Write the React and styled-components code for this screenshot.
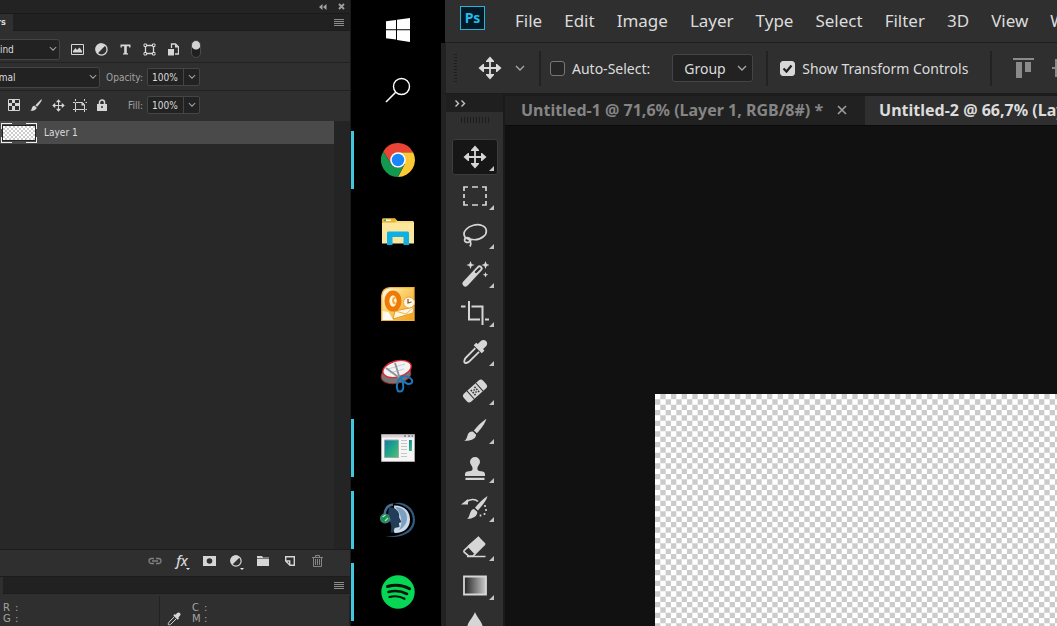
import React from 'react';
import styled, { createGlobalStyle, css } from 'styled-components';

const GlobalStyle = createGlobalStyle`
  * {
    box-sizing: border-box;
  }

  body {
    margin: 0;
    background: #000;
    overflow: hidden;
  }

  button, input, select {
    font: inherit;
    color: inherit;
    margin: 0;
  }
`

const Screen = styled.div`
  display: flex;
  height: 100vh;
  overflow: hidden;
  color: #dcdcdc;
`

const IconButton = styled.button`
  display: flex;
  align-items: center;
  justify-content: center;
  flex: none;
  position: relative;
  width: ${p => p.$w || 22}px;
  height: ${p => p.$h || 20}px;
  padding: 0;
  border: 0;
  background: none;
  color: ${p => p.$color || '#d6d6d6'};
`

/* ---------- layers panel ---------- */

const LayersClip = styled.aside`
  flex: none;
  width: 351px;
  overflow: hidden;
  border-right: 1px solid #1a1a1a;
  background: #2f2f2f;
  font-family: 'DejaVu Sans Condensed', 'DejaVu Sans', sans-serif;
  font-size: 10px;
`

const LayersPanel = styled.div`
  display: flex;
  flex-direction: column;
  height: 100%;
  margin-left: -24px;
`

const PanelTop = styled.div`
  display: flex;
  align-items: center;
  justify-content: flex-end;
  height: 14px;
  flex: none;
  background: #232323;
  border-bottom: 1px solid #1a1a1a;
`

const PanelTabs = styled.div`
  display: flex;
  justify-content: space-between;
  height: 17px;
  flex: none;
  background: #212121;
  border-bottom: 1px solid #1c1c1c;
`

const PanelTab = styled.div`
  width: ${p => p.$w}px;
  height: 17px;
  line-height: 17px;
  font-size: 9px;
  font-weight: bold;
  background: #2f2f2f;
`

const PanelRow = styled.div`
  display: flex;
  align-items: center;
  flex: none;
  height: ${p => p.$h}px;
  padding: ${p => p.$top || 0}px 0 ${p => p.$bottom || 0}px ${p => p.$left || 0}px;
  border-bottom: ${p => p.$last ? '0' : '1px solid #222'};
`

const SelectBox = styled.label`
  display: flex;
  align-items: center;
  position: relative;
  flex: none;
  width: ${p => p.$w}px;
  height: ${p => p.$h}px;
  border: 1px solid #454545;
  border-radius: 3px;
  background: #222;

  select {
    width: 100%;
    height: 100%;
    padding: 0 0 0 ${p => p.$pad}px;
    border: 0;
    background: none;
    appearance: none;
  }

  svg {
    position: absolute;
    right: ${p => p.$arrow || 2}px;
    pointer-events: none;
  }
`

const FieldLabel = styled.label`
  width: ${p => p.$w}px;
  padding-right: 4px;
  text-align: right;
  color: #a3a3a3;
`

const PercentBox = styled.div`
  display: flex;
  width: 53px;
  height: 18px;
  border: 1px solid #454545;
  border-radius: 2px;
  background: #222;

  input {
    width: 36px;
    height: 16px;
    padding: 0 0 0 4px;
    border: 0;
    border-right: 1px solid #454545;
    background: none;
  }
`

const Toggle = styled.button`
  width: 10px;
  height: 18px;
  margin-left: 7px;
  padding: 0;
  border: 1px solid #4a4a4a;
  border-radius: 5px;
  background: radial-gradient(circle at 4px 4px, #d2d2d2 4px, #1f1f1f 5px);
`

const LayerArea = styled.div`
  display: flex;
  flex: 1;
  min-height: 0;
  background: #282828;
`

const LayerList = styled.ul`
  flex: 1;
  margin: 0;
  padding: 0;
  list-style: none;
`

const LayerScroll = styled.div`
  width: 16px;
  background: #242424;
`

// six squares each way per tile
const checker = css`
  background-color: #fff;
  background-image: url("data:image/svg+xml,%3Csvg xmlns='http://www.w3.org/2000/svg' viewBox='0 0 6 6'%3E%3Cpath fill='%23cbcbcb' d='M1 0h1v1H1zM3 0h1v1H3zM5 0h1v1H5zM0 1h1v1H0zM2 1h1v1H2zM4 1h1v1H4zM1 2h1v1H1zM3 2h1v1H3zM5 2h1v1H5zM0 3h1v1H0zM2 3h1v1H2zM4 3h1v1H4zM1 4h1v1H1zM3 4h1v1H3zM5 4h1v1H5zM0 5h1v1H0zM2 5h1v1H2zM4 5h1v1H4z'/%3E%3C/svg%3E");
`

const LayerRow = styled.li`
  display: flex;
  align-items: center;
  height: 23px;
  padding-left: 25px;
  background: #4a4a4a;
`

const LayerThumb = styled.div`
  display: flex;
  align-items: center;
  justify-content: center;
  width: 36px;
  height: 20px;
  margin-right: 7px;
  background:
    linear-gradient(#eee, #eee) 0 0 / 11px 1px,
    linear-gradient(#eee, #eee) 0 0 / 1px 6px,
    linear-gradient(#eee, #eee) 100% 0 / 11px 1px,
    linear-gradient(#eee, #eee) 100% 0 / 1px 6px,
    linear-gradient(#eee, #eee) 0 100% / 11px 1px,
    linear-gradient(#eee, #eee) 0 100% / 1px 6px,
    linear-gradient(#eee, #eee) 100% 100% / 11px 1px,
    linear-gradient(#eee, #eee) 100% 100% / 1px 6px;
  background-repeat: no-repeat;

  &::before {
    content: '';
    width: 32px;
    height: 14px;
    border: 1px solid #222;
    ${checker}
    background-size: 12px 12px;
  }
`

const PanelFooter = styled.div`
  display: flex;
  align-items: center;
  justify-content: flex-end;
  gap: 5px;
  height: 28px;
  flex: none;
  padding: 0 22px 4px 0;
  border-top: 1px solid #1c1c1c;
  border-bottom: 1px solid #1c1c1c;
`

const ColorInfo = styled.div`
  display: flex;
  flex: none;
  height: 32px;
`

const ColorHalf = styled.div`
  display: flex;
  align-items: flex-start;
  flex: ${p => p.$grow ? 1 : 'none'};
  width: ${p => p.$grow ? 'auto' : '184px'};
  margin-top: 2px;
  padding: 6px 0 0 ${p => p.$grow ? 5 : 27}px;
  border-right: 1px solid #222;
  font-family: 'DejaVu Sans', sans-serif;
  line-height: 11px;
  color: #a3a3a3;
`

const Channel = styled.div`
  display: grid;
  grid-template-columns: 12px 5px;
`

/* ---------- task bar ---------- */

const TaskBar = styled.nav`
  display: flex;
  flex-direction: column;
  flex: none;
  width: 90px;
  overflow: hidden;
  background: #000;
`

const TaskButton = styled.button`
  display: flex;
  align-items: center;
  justify-content: center;
  flex: none;
  height: ${p => p.$small ? 60 : 72}px;
  padding: 0 0 0 4px;
  border: 0;
  background: ${p => p.$running
    ? 'linear-gradient(#41c8df, #41c8df) 0 50% / 3px 58px no-repeat'
    : 'none'};
`

const TaskApps = styled.div`
  display: flex;
  flex-direction: column;
  margin-top: 4px;
`

/* ---------- main window ---------- */

const Window = styled.main`
  display: flex;
  flex-direction: column;
  flex: 1;
  min-width: 0;
  font-family: 'Noto Sans', sans-serif;
`

const MenuBar = styled.header`
  display: flex;
  align-items: center;
  flex: none;
  height: 43px;
  margin-left: 4px;
  padding: 0 0 1px 15px;
  overflow: hidden;
  background: #2f2f2f;
  border-bottom: 1px solid #1f1f1f;
`

const Logo = styled.div`
  display: flex;
  align-items: center;
  justify-content: center;
  flex: none;
  width: 25px;
  height: 24px;
  margin: 0 30px 5px 0;
  padding-bottom: 1px;
  border: 1px solid #26b4dc;
  background: #031926;
  color: #22bdec;
  font-size: 14px;
  font-weight: bold;
`

const Menu = styled.div`
  display: flex;
  gap: 22px;
  flex: none;
`

const MenuItem = styled.button`
  padding: 0;
  border: 0;
  background: none;
  font-size: 17px;
  line-height: 24px;
  white-space: nowrap;
`

const OptionsBar = styled.div`
  display: flex;
  align-items: center;
  flex: none;
  height: 51px;
  padding-left: 8px;
  border-left: 5px solid #222;
  border-bottom: 1px solid #1c1c1c;
  overflow: hidden;
  background: #2f2f2f;
  font-size: 14px;
`

const Grip = styled.div`
  flex: none;
  width: ${p => p.$across ? 28 : 3}px;
  height: ${p => p.$across ? 6 : 28}px;
  background: repeating-linear-gradient(${p => p.$across ? '90deg' : '180deg'}, #1d1d1d 0 1px, transparent 1px 3px);
`

const Divider = styled.div`
  flex: none;
  width: 2px;
  height: 35px;
  background: #222;
`

const CheckLabel = styled.label`
  display: flex;
  align-items: center;
  gap: 7px;
  flex: none;
  white-space: nowrap;

  input {
    width: 15px;
    height: 15px;
    border: 1px solid #777;
    border-radius: 3px;
    background: #262626;
    appearance: none;
  }

  input:checked {
    border-color: #d8d8d8;
    background: #d8d8d8;
  }
`

const CheckWrap = styled.span`
  display: grid;
  place-items: center;

  > * {
    grid-area: 1 / 1;
  }

  svg {
    z-index: 1;
    pointer-events: none;
  }
`

const OptionGroup = styled.div`
  display: flex;
  align-items: center;
  flex: none;
  gap: ${p => p.$gap}px;
  padding: 0 ${p => p.$right}px 0 ${p => p.$left}px;
`

const Workspace = styled.div`
  display: flex;
  flex: 1;
  min-height: 0;
`

const ToolStrip = styled.div`
  display: flex;
  flex-direction: column;
  flex: none;
  width: 64px;
  border-left: 5px solid #222;
  border-right: 2px solid #1a1a1a;
  overflow: hidden;
  background: #2f2f2f;
`

const ToolHead = styled.div`
  display: flex;
  align-items: center;
  flex: none;
  height: 18px;
  padding-left: 8px;
  background: #1f1f1f;
`

const ToolGrip = styled.div`
  display: flex;
  justify-content: center;
  flex: none;
  height: 26px;
  padding-top: 5px;
`

const ToolList = styled.div`
  display: flex;
  flex-direction: column;
  gap: 3px;
  padding: 1px 5px 0 6px;
`

const Tool = styled.button`
  display: flex;
  align-items: center;
  justify-content: center;
  flex: none;
  height: 36px;
  padding: 0;
  border: 1px solid ${p => p.$active ? '#3c3c3c' : 'transparent'};
  border-radius: 3px;
  background: ${p => p.$active ? '#161616' : 'none'};
  color: #d6d6d6;
`

const ToolCell = styled.div`
  display: grid;
  position: relative;
  flex: none;
`

const Corner = styled.span`
  position: absolute;
  right: 4px;
  bottom: 4px;
  border-style: solid;
  border-width: 0 0 5px 5px;
  border-color: transparent transparent #c4c4c4 transparent;
`

const Documents = styled.section`
  display: flex;
  flex-direction: column;
  flex: 1;
  min-width: 0;
  background: #111;
`

const DocTabs = styled.div`
  display: flex;
  flex: none;
  height: 32px;
  padding-left: 2px;
  overflow: hidden;
  background: #212121;
  border-top: 2px solid #1c1c1c;
  border-bottom: 1px solid #0b0b0b;
`

const DocTab = styled.div`
  display: flex;
  align-items: center;
  gap: 14px;
  flex: none;
  padding: 0 18px 1px 14px;
  background: ${p => p.$active ? '#2f2f2f' : 'none'};
  color: ${p => p.$active ? '#dcdcdc' : '#858585'};
  font-size: 16px;
  font-weight: bold;
  white-space: nowrap;
`

const CanvasArea = styled.div`
  display: flex;
  flex: 1;
  min-height: 0;
  padding: 268px 0 0 150px;
`

const Canvas = styled.div`
  flex: 1;
  ${checker}
  background-size: 32px 32px;
`

/* ---------- icons ---------- */

const Svg = ({ s = 24, w, h, box, children }) => (
  <svg width={w || s} height={h || s} viewBox={box || '0 0 24 24'} fill="none" aria-hidden="true">
    {children}
  </svg>
)

const Chevron = ({ s = 8 }) => (
  <Svg w={s} h={s / 2 + 2} box="0 0 10 7">
    <path d="M1 1l4 4 4-4" stroke="#a8a8a8" strokeWidth="1.3" />
  </Svg>
)

const MenuLines = () => (
  <Svg w={10} h={9} box="0 0 10 9">
    <path d="M0 1.5h10M0 3.5h10M0 5.5h10M0 7.5h10" stroke="#8c8c8c" />
  </Svg>
)

const MoveIcon = ({ s = 24 }) => (
  <Svg s={s}>
    <path d="M12 4v16M4 12h16" stroke="currentColor" strokeWidth="1.8" />
    <path d="M12 .5l4 4.500v1H8V5zM12 23.500l4-4.500v-1H8v1zM.5 12L5 8h1v8H5zM23.500 12L19 8h-1v8h1z" fill="currentColor" />
  </Svg>
)

const BrushIcon = ({ s = 26 }) => (
  <Svg s={s}>
    <path d="M22.5 1.5C18.5 4 14 8.5 11 12.5l2.7 2.5C17.5 11 21.5 5.5 22.5 1.5z" fill="currentColor" />
    <path d="M10.2 13.5l2.7 2.6c.5 3-3.5 6.2-10.9 5.9 2.5-1.3 2.3-3.2 3.3-5.7.9-2.2 3-3.3 4.9-2.8z" fill="currentColor" />
  </Svg>
)

const DropperIcon = ({ s = 26 }) => (
  <Svg s={s}>
    <path d="M22.2 1.9c1.5 1.5 1.3 3.4 0 4.7l-2.7 2.7 1.2 1.5-2.5 2.3-7.4-7.3 2.3-2.4 1.5 1.2 2.8-2.7c1.3-1.3 3.4-1.4 4.8 0z" fill="currentColor" />
    <path d="M12.3 8.5L3.500 17.3c-1 1-1.9 3.7-1.1 4.5s3.4-.1 4.4-1.1l8.900-8.900" stroke="currentColor" strokeWidth="1.7" />
  </Svg>
)

const HalfCircle = ({ s = 13 }) => (
  <Svg s={s} box="0 0 14 14">
    <circle cx="7" cy="7" r="6" stroke="currentColor" strokeWidth="1.4" />
    <path d="M11.2 2.8A6 6 0 1 0 2.8 11.2z" fill="currentColor" />
  </Svg>
)

const ImageIcon = () => (
  <Svg w={13} h={11} box="0 0 13 11">
    <path d="M.5.5h12v10H.5z" stroke="currentColor" />
    <path d="M2 8.500V7l2.500-3L6 6l2.500-2.500L11 7v1.500z" fill="currentColor" />
  </Svg>
)

const TypeIcon = () => (
  <Svg w={11} h={11} box="0 0 11 11">
    <path d="M.5.5h10v3H9.200L9 2.200H6.800v7H8v1.300H3V9.200h1.200v-7H2l-.2 1.300H.5z" fill="currentColor" />
  </Svg>
)

const ShapeIcon = () => (
  <Svg w={13} h={13} box="0 0 13 13">
    <path d="M3 2.5h7M3 10.5h7M2.5 3v7M10.5 3v7" stroke="currentColor" strokeWidth="1.3" />
    <path d="M1 1h2.500v2.500H1zM9.500 1H12v2.500H9.500zM1 9.500h2.500V12H1zM9.500 9.500H12V12H9.500z" stroke="currentColor" fill="#2f2f2f" />
  </Svg>
)

const SmartIcon = () => (
  <Svg w={11} h={13} box="0 0 11 13">
    <path d="M3.5 5V1h4l3 3v7H7" stroke="currentColor" strokeWidth="1.3" />
    <path d="M7 1v3.500h3.500M0 6h6v6.500H0z" fill="currentColor" />
  </Svg>
)

const CheckerIcon = () => (
  <Svg w={12} h={12} box="0 0 12 12">
    <path d="M.5.5h11v11H.5z" stroke="currentColor" />
    <path d="M4 1h3v3H4zM1 4h3v3H1zM7 4h4v3H7zM4 7h3v4H4z" fill="currentColor" />
  </Svg>
)

const ArtboardIcon = () => (
  <Svg w={14} h={13} box="0 0 14 13">
    <path d="M3 3.500h6.500l2 2v5h-9v-7M0 3.500h2M12.500 3.500H14M0 10.500h2M12.500 10.500H14M2.500 0v2M2.500 11v2M11.500 11v2M11.500 0v2" stroke="currentColor" />
    <path d="M8.500 3v3.500H12z" fill="currentColor" />
  </Svg>
)

const LockIcon = () => (
  <Svg w={10} h={12} box="0 0 10 12">
    <path d="M2.5 6V3.500a2.500 2.500 0 0 1 5 0V6" stroke="currentColor" strokeWidth="1.5" />
    <path d="M0 5h10v7H0z" fill="currentColor" />
    <circle cx="5" cy="8" r="1" fill="#2f2f2f" />
  </Svg>
)

const LinkIcon = () => (
  <Svg w={14} h={8} box="0 0 14 8">
    <path d="M6 1.500H3.500a2.500 2.500 0 0 0 0 5H6M8 1.500h2.500a2.500 2.500 0 0 1 0 5H8M4 4h6" stroke="#808080" strokeWidth="1.3" />
  </Svg>
)

const FxLabel = styled.span`
  font-family: 'Noto Sans', sans-serif;
  font-size: 14px;
  font-style: italic;
  font-weight: 500;
  line-height: 16px;
`

const MoreMark = styled.span`
  position: absolute;
  right: 3px;
  bottom: 1px;
  border-style: solid;
  border-width: 2px 2px 0 2px;
  border-color: #eee transparent transparent transparent;
`

const MaskIcon = () => (
  <Svg w={13} h={10} box="0 0 13 10">
    <path d="M0 0h13v10H0z" fill="currentColor" />
    <circle cx="6.5" cy="5" r="2.8" fill="#2f2f2f" />
  </Svg>
)

const FolderIcon = () => (
  <Svg w={12} h={10} box="0 0 12 10">
    <path d="M0 0h5l1 1.500h6V10H0z" fill="currentColor" />
    <path d="M0 2.500h12" stroke="#2f2f2f" strokeWidth=".6" />
  </Svg>
)

const NewIcon = () => (
  <Svg w={10} h={10} box="0 0 10 10">
    <path d="M.7 4.500V.7h8.600v8.600H5M.7 5h4v4z" stroke="currentColor" strokeWidth="1.4" />
  </Svg>
)

const TrashIcon = () => (
  <Svg w={11} h={12} box="0 0 11 12">
    <path d="M0 2.500h11M3.500 2V.5h4V2M1.500 3v8.500h8V3M3.500 4v6M5.500 4v6M7.500 4v6" stroke="#858585" />
  </Svg>
)

const tools = [
  { name: 'Move', icon: <MoveIcon /> },
  {
    name: 'Marquee',
    icon: <Svg s={26} box="0 0 26 26"><path d="M2 8V4h4M10 4h6M20 4h4v4M24 11v4M24 18v4h-4M16 22h-6M6 22H2v-4M2 15v-4" stroke="currentColor" strokeWidth="1.7" /></Svg>,
  },
  {
    name: 'Lasso',
    icon: <Svg s={26} box="0 0 26 26"><path d="M4.5 17C1.500 14.500 1 10.500 4 7.500 7.500 3.500 15 1.500 20 3.500c5.500 2 5.500 8 1.500 11-4 3.300-9.500 3.700-13.500 2.500M7 20c-2 1-4.500 0-4.500-2S5 15 7 16s3 3 0 4zM5 16.500c3 1 5 4 3 8" stroke="currentColor" strokeWidth="1.7" /></Svg>,
  },
  {
    name: 'Magic Wand',
    icon: (
      <Svg w={28} h={26} box="0 0 28 26">
        <path d="M4.5 22.500L18.500 7.500" stroke="currentColor" strokeWidth="6" strokeLinecap="round" />
        <path d="M15 11L18.500 7.500" stroke="#2f2f2f" strokeWidth="2.4" strokeLinecap="round" />
        <path d="M9.500 0l1.200 3 3 1-3 1-1.200 3-1.200-3-3-1 3-1zM24.500 0l1.200 3 3 1-3 1-1.200 3-1.200-3-3-1 3-1zM24.500 11l.8 2 2 .8-2 .8-.8 2-.8-2-2-.8 2-.8z" fill="currentColor" />
      </Svg>
    ),
  },
  {
    name: 'Crop',
    icon: <Svg w={28} h={26} box="0 0 28 26"><path d="M0 6.500h4.500M8 1v18.500h11M10.500 6.500H21.500V25M24 19.500h4" stroke="currentColor" strokeWidth="2" /></Svg>,
  },
  { name: 'Eyedropper', icon: <DropperIcon /> },
  {
    name: 'Healing Brush',
    icon: (
      <Svg s={26}>
        <g transform="rotate(-42 12 12)">
          <rect x="0" y="7" width="24" height="10" rx="3" fill="currentColor" />
          <path d="M6.500 7v10M17.500 7v10" stroke="#2f2f2f" />
          <path d="M9 9.500h1.500M13.500 9.500H15M9 12h1.500M13.500 12H15M9 14.500h1.500M13.500 14.500H15M11.400 10.800h1.300M11.400 13.300h1.300" stroke="#2f2f2f" strokeWidth="1.4" />
        </g>
      </Svg>
    ),
  },
  { name: 'Brush', icon: <BrushIcon /> },
  {
    name: 'Clone Stamp',
    icon: (
      <Svg s={24}>
        <path d="M12 0a5 5 0 0 1 5 5c0 2.700-2.600 4-2.600 6.500 0 1.800 1.100 2.500 3.600 2.700 2.500.1 4 1 4 3V19H2v-1.800c0-2 1.500-2.900 4-3 2.500-.2 3.600-.9 3.600-2.700C9.600 9 7 7.700 7 5a5 5 0 0 1 5-5zM2.500 20.800h19v2.200h-19z" fill="currentColor" />
      </Svg>
    ),
  },
  {
    name: 'History Brush',
    icon: (
      <Svg w={28} h={26} box="0 0 28 26">
        <path d="M26.500 1C22 4 17 9 14 12.800l3 2.600C21 11 25.500 5.500 26.500 1zM13 14l3.200 2.800c.5 4-4 7-10 7 2-1.400 2-3.400 3-6 .8-2.300 2.300-3.800 3.800-3.800zM0 9.500L7 4v5.500z" fill="currentColor" />
        <path d="M5 7c4-3 9-3.500 12-.5" stroke="currentColor" strokeWidth="1.6" />
        <path d="M24 10v2M25 14v2M23.500 18v2M19.500 19.500v2" stroke="currentColor" strokeWidth="1.6" />
      </Svg>
    ),
  },
  {
    name: 'Eraser',
    icon: (
      <Svg s={26} box="0 0 26 26">
        <path d="M16.500 2.500l7 7L13 19.500 5.500 12z" fill="currentColor" />
        <path d="M17 3L2.500 16c-.8.8-.8 1.700 0 2.500L6.500 22H11L23 10M5 22.500h18.500M6.500 12.500l6.500 7" stroke="currentColor" strokeWidth="1.7" />
      </Svg>
    ),
  },
  {
    name: 'Gradient',
    icon: (
      <Svg s={26} box="0 0 26 26">
        <defs>
          <linearGradient id="toolGradient">
            <stop stopColor="#222" />
            <stop offset="1" stopColor="#ccc" />
          </linearGradient>
        </defs>
        <path d="M2 3.500h22v18H2z" fill="url(#toolGradient)" stroke="currentColor" strokeWidth="1.8" />
      </Svg>
    ),
  },
  {
    name: 'Blur',
    icon: <Svg s={26} box="0 0 26 26"><path d="M13 0c2 6 8 10 8 17a8 8 0 0 1-16 0C5 10 11 6 13 0z" fill="currentColor" /></Svg>,
  },
]

/* ---------- task bar icons ---------- */

const WindowsIcon = () => (
  <Svg s={24}>
    <path d="M0 3.200l10-1.300v9.300H0zM11 1.700L24 0v11.200H11zM0 12.200h10v9.400L0 20.300zM11 12.200h13V24l-13-2z" fill="#fff" />
  </Svg>
)

const SearchIcon = () => (
  <Svg s={26} box="0 0 26 26">
    <circle cx="16.500" cy="9.500" r="8" stroke="#fff" strokeWidth="1.4" />
    <path d="M10.700 15.300L1 25" stroke="#fff" strokeWidth="1.6" />
  </Svg>
)

const ChromeIcon = () => (
  <Svg s={34} box="0 0 48 48">
    <path d="M24 13h21.300A24 24 0 0 1 24 48l9.500-18.500z" fill="#fcc934" />
    <path d="M24 13h21.300a24 24 0 0 0-42.100-1L14.500 29.500z" fill="#e94435" />
    <path d="M3.200 12l11.300 17.500A11 11 0 0 0 33.500 29.500L24 48A24 24 0 0 1 3.200 12z" fill="#12994f" />
    <circle cx="24" cy="24" r="11" fill="#fff" />
    <circle cx="24" cy="24" r="8.800" fill="#1a86fb" />
  </Svg>
)

const ExplorerIcon = () => (
  <Svg w={34} h={28} box="0 0 34 28">
    <path d="M1 2c0-1 .5-1.500 1.500-1.500H14L16.500 3H32l1 1v21H1z" fill="#f8dd83" />
    <path d="M1 2c0-1 .5-1.500 1.500-1.500H14L16 2.500l-2 2H1z" fill="#e9b52c" />
    <path d="M3 1.500h7v1.500H3z" fill="#fff" />
    <path d="M3 1.500h2v1.500H3z" fill="#2ca57c" />
    <path d="M1 5h32v20.500H1z" fill="#fbe69c" />
    <path d="M6 15.500c0-1.500.5-2 2-2h18c1.500 0 2 .5 2 2V27h-5.500v-8h-11v8H6z" fill="#0fb0e4" />
  </Svg>
)

const OutlookIcon = () => (
  <Svg s={34} box="0 0 34 34">
    <defs>
      <linearGradient id="outlookBg" x1="0" y1="0" x2="1" y2="1">
        <stop stopColor="#fff" />
        <stop offset=".4" stopColor="#fbd36d" />
        <stop offset="1" stopColor="#f39c1c" />
      </linearGradient>
    </defs>
    <path d="M9 .7h24v32.600H.7V9C1 4 4 1 9 .7z" fill="url(#outlookBg)" stroke="#f0b33a" strokeWidth="1.3" />
    <path d="M1.500 24l6 1 5 8h-11z" fill="#fffaf0" />
    <path d="M14 24l19-4-1 6-20 6z" fill="#fff6dc" stroke="#e49b2d" />
    <path d="M14 24l11 3 8-7" stroke="#eab65a" />
    <ellipse cx="12" cy="14" rx="6" ry="8" stroke="#ee7a08" strokeWidth="5" />
    <ellipse cx="12" cy="14" rx="3.500" ry="5.500" fill="#fff3d6" />
    <path d="M14.500 11c-3-1-3.500 5 0 5.500" stroke="#f5a93a" strokeWidth="2" />
    <circle cx="28" cy="15.500" r="5.500" fill="#fff7e2" stroke="#e8a74b" />
    <path d="M27 12v4l3.500-1" stroke="#8c5a28" strokeWidth="1.3" />
  </Svg>
)

const SnipIcon = () => (
  <Svg w={36} h={36} box="0 0 36 36">
    <ellipse cx="16" cy="17" rx="15" ry="8.500" transform="rotate(-10 16 17)" fill="#777" stroke="#9d2f31" />
    <ellipse cx="17" cy="11" rx="14.500" ry="8" transform="rotate(-15 17 11)" fill="#f4f3f3" stroke="#dc2b34" strokeWidth="1.400" />
    <path d="M8 11l17-5M10 15l14-4" stroke="#c8ccd0" />
    <path d="M6 10l15 11M15 5l5 16" stroke="#8b949b" strokeWidth="1.800" />
    <path d="M20 20c4-3 9-2 12 2 1 3-1 4-4 4-3-1-5-3-8-6zM20 20c-3 4-4 9-2 13 5 2 6-3 5-7 0-2-1-4-3-6z" stroke="#1979bf" strokeWidth="2" strokeLinejoin="round" />
  </Svg>
)

const EditorIcon = () => (
  <Svg w={34} h={28} box="0 0 34 28">
    <defs>
      <linearGradient id="editorArt" x1="0" y1="0" x2="1" y2="1">
        <stop stopColor="#1a75a9" />
        <stop offset=".5" stopColor="#1fa78a" />
        <stop offset="1" stopColor="#5abf6b" />
      </linearGradient>
    </defs>
    <path d="M.5.5h33v27H.5z" fill="#f5f5f5" stroke="#aaa4a8" />
    <path d="M1 1h32v2.500H1z" fill="#d6cfd5" />
    <path d="M23 2h2M27 2h2M30.500 2H32" stroke="#555" />
    <path d="M3.500 6h14v17.500h-14z" fill="url(#editorArt)" stroke="#9aa" />
    <path d="M20 6.500h6M20 9.500h6M20 12.500h6M20 15.500h6M20 19.500h6M20 22.500h6" stroke="#c5c5c5" />
    <path d="M28 6h3v11h-3z" fill="url(#editorArt)" />
  </Svg>
)

const TeamspeakIcon = () => (
  <Svg s={36} box="0 0 36 36">
    <path d="M13 1.500c11-3 22 4 22 16.500 0 12-12 19-30 16.500C20 35 32.500 29 32.800 18 33 8 24 1.500 13 1.500z" fill="#315a7d" />
    <path d="M14 3.500c9-.5 16 5 16 14S23 31.500 14.500 31l-1-3 4-9-3-6z" fill="#cbd9e8" />
    <path d="M15 5c8 0 12 5 12 11s-4 10-8 12c2-3 3-7 2-12s-3-8-6-11z" fill="#7d9fc0" />
    <path d="M17 14c4 1 5 7 1 11z" fill="#e4edf5" />
    <path d="M9 5l5 1c4 2 6 6 5 9l2.500 5-2.500 1 .5 4-5 1-1 4.500h-3c2-7 0-11-3-14z" fill="#223d59" />
    <path d="M4.500 13C5 7 8 3 13 2.500M5 20c2 0 4-1 5-3" stroke="#466f92" strokeWidth="2.500" />
    <circle cx="5" cy="16.500" r="4.500" fill="#159447" stroke="#4d7690" strokeWidth="1.200" />
    <path d="M2.500 15l3-2M5 19l3-3" stroke="#a8e6b5" strokeWidth="1.400" />
  </Svg>
)

const SpotifyIcon = () => (
  <Svg s={34} box="0 0 34 34">
    <circle cx="17" cy="17" r="16.700" fill="#06d755" />
    <path d="M6.500 11.500c7-2 15.500-1.300 22 2.300" stroke="#06140b" strokeWidth="3" strokeLinecap="round" />
    <path d="M7.500 17c6-1.600 13-1 18.500 2" stroke="#06140b" strokeWidth="2.600" strokeLinecap="round" />
    <path d="M8.500 22c5-1.300 10.500-.8 15 1.800" stroke="#06140b" strokeWidth="2.200" strokeLinecap="round" />
  </Svg>
)

const apps = [
  { name: 'Chrome', icon: <ChromeIcon />, running: true },
  { name: 'File Explorer', icon: <ExplorerIcon /> },
  { name: 'Outlook', icon: <OutlookIcon /> },
  { name: 'Snipping Tool', icon: <SnipIcon /> },
  { name: 'Editor', icon: <EditorIcon />, running: true },
  { name: 'TeamSpeak', icon: <TeamspeakIcon />, running: true },
  { name: 'Spotify', icon: <SpotifyIcon />, running: true },
]

const menus = ['File', 'Edit', 'Image', 'Layer', 'Type', 'Select', 'Filter', '3D', 'View', 'Window']

const Percent = ({ id }) => (
  <PercentBox>
    <input id={id} defaultValue="100%" />
    <IconButton $w={15} $h={16} aria-label="Choose value"><Chevron /></IconButton>
  </PercentBox>
)

const Layers = () => (
  <LayersClip>
    <LayersPanel>
      <PanelTop>
        <IconButton $w={18} $h={13} aria-label="Collapse">
          <Svg w={8} h={6} box="0 0 8 6"><path d="M3.500 0v6L0 3zM7.500 0v6L4 3z" fill="#a5a5a5" /></Svg>
        </IconButton>
        <IconButton $w={18} $h={13} aria-label="Close">
          <Svg w={7} h={7} box="0 0 7 7"><path d="M1 1l5 5M6 1L1 6" stroke="#a0a0a0" strokeWidth="1.8" /></Svg>
        </IconButton>
      </PanelTop>
      <PanelTabs>
        <PanelTab $w={37}>Layers</PanelTab>
        <IconButton $w={23} $h={17} aria-label="Panel menu"><MenuLines /></IconButton>
      </PanelTabs>
      <PanelRow $h={32} $top={5}>
        <SelectBox $w={84} $h={21} $pad={17}>
          <select aria-label="Filter layers"><option>Kind</option></select>
          <Chevron />
        </SelectBox>
        <OptionGroup $gap={2} $left={6} $right={0}>
          <IconButton aria-label="Pixel layers"><ImageIcon /></IconButton>
          <IconButton aria-label="Adjustment layers"><HalfCircle /></IconButton>
          <IconButton aria-label="Type layers"><TypeIcon /></IconButton>
          <IconButton aria-label="Shape layers"><ShapeIcon /></IconButton>
          <IconButton aria-label="Smart objects"><SmartIcon /></IconButton>
        </OptionGroup>
        <Toggle aria-label="Toggle filter" />
      </PanelRow>
      <PanelRow $h={28} $top={1}>
        <SelectBox $w={124} $h={21} $pad={6}>
          <select aria-label="Blend mode"><option>Normal</option></select>
          <Chevron />
        </SelectBox>
        <OptionGroup $gap={0} $left={3} $right={0}>
          <FieldLabel htmlFor="opacity" $w={44}>Opacity:</FieldLabel>
          <Percent id="opacity" />
        </OptionGroup>
      </PanelRow>
      <PanelRow $h={30} $bottom={2} $left={27} $last>
        <IconButton aria-label="Lock transparency"><CheckerIcon /></IconButton>
        <IconButton aria-label="Lock pixels"><BrushIcon s={14} /></IconButton>
        <IconButton aria-label="Lock position"><MoveIcon s={13} /></IconButton>
        <IconButton aria-label="Lock artboard"><ArtboardIcon /></IconButton>
        <IconButton aria-label="Lock all"><LockIcon /></IconButton>
        <OptionGroup $gap={0} $left={0} $right={0}>
          <FieldLabel htmlFor="fill" $w={34}>Fill:</FieldLabel>
          <Percent id="fill" />
        </OptionGroup>
      </PanelRow>
      <LayerArea>
        <LayerList>
          <LayerRow><LayerThumb />Layer 1</LayerRow>
        </LayerList>
        <LayerScroll />
      </LayerArea>
      <PanelFooter>
        <IconButton aria-label="Link layers"><LinkIcon /></IconButton>
        <IconButton aria-label="Layer style"><FxLabel>fx</FxLabel><MoreMark /></IconButton>
        <IconButton aria-label="Add mask"><MaskIcon /></IconButton>
        <IconButton aria-label="Adjustment layer"><HalfCircle s={12} /><MoreMark /></IconButton>
        <IconButton aria-label="New group"><FolderIcon /></IconButton>
        <IconButton aria-label="New layer"><NewIcon /></IconButton>
        <IconButton aria-label="Delete layer"><TrashIcon /></IconButton>
      </PanelFooter>
      <PanelTabs>
        <PanelTab $w={27} />
        <IconButton $w={23} $h={17} aria-label="Panel menu"><MenuLines /></IconButton>
      </PanelTabs>
      <ColorInfo>
        <ColorHalf>
          <Channel><span>R</span><span>:</span><span>G</span><span>:</span></Channel>
        </ColorHalf>
        <ColorHalf $grow>
          <IconButton $w={18} $h={34} aria-label="Sample color"><DropperIcon s={14} /></IconButton>
          <OptionGroup $gap={0} $left={9} $right={0}>
            <Channel><span>C</span><span>:</span><span>M</span><span>:</span></Channel>
          </OptionGroup>
        </ColorHalf>
      </ColorInfo>
    </LayersPanel>
  </LayersClip>
)

export default function App() {
  return (
    <Screen>
      <GlobalStyle />
      <Layers />
      <TaskBar>
        <TaskButton $small aria-label="Start"><WindowsIcon /></TaskButton>
        <TaskButton $small aria-label="Search"><SearchIcon /></TaskButton>
        <TaskApps>
          {apps.map(app => (
            <TaskButton key={app.name} $running={app.running} aria-label={app.name}>{app.icon}</TaskButton>
          ))}
        </TaskApps>
      </TaskBar>
      <Window>
        <MenuBar>
          <Logo>Ps</Logo>
          <Menu>
            {menus.map(name => <MenuItem key={name}>{name}</MenuItem>)}
          </Menu>
        </MenuBar>
        <OptionsBar>
          <Grip />
          <OptionGroup $gap={9} $left={21} $right={10}>
            <MoveIcon />
            <IconButton $w={18} aria-label="Tool presets"><Chevron s={10} /></IconButton>
          </OptionGroup>
          <Divider />
          <OptionGroup $gap={22} $left={9} $right={13}>
            <CheckLabel><input type="checkbox" />Auto-Select:</CheckLabel>
            <SelectBox $w={81} $h={28} $pad={11} $arrow={5}>
              <select aria-label="Auto-select target"><option>Group</option></select>
              <Chevron s={10} />
            </SelectBox>
          </OptionGroup>
          <Divider />
          <OptionGroup $gap={0} $left={12} $right={22}>
            <CheckLabel>
              <CheckWrap>
                <input type="checkbox" defaultChecked />
                <Svg s={11} box="0 0 11 11"><path d="M1.500 5.500l3 3 5-6" stroke="#222" strokeWidth="2.2" /></Svg>
              </CheckWrap>
              Show Transform Controls
            </CheckLabel>
          </OptionGroup>
          <Divider />
          <OptionGroup $gap={18} $left={21} $right={0}>
            <Svg w={21} h={20} box="0 0 21 20">
              <path d="M0 1h21" stroke="#8a8a8a" strokeWidth="2" />
              <path d="M3 4h6v16H3zM12 4h6v10h-6z" fill="#8a8a8a" />
            </Svg>
            <Svg w={21} h={20} box="0 0 21 20">
              <path d="M0 10h21" stroke="#8a8a8a" strokeWidth="2" />
              <path d="M3 1h6v18H3zM12 4h6v12h-6z" fill="#8a8a8a" />
            </Svg>
          </OptionGroup>
        </OptionsBar>
        <Workspace>
          <ToolStrip>
            <ToolHead>
              <Svg w={12} h={7} box="0 0 12 7"><path d="M1.500.5l3 3-3 3M7.500.5l3 3-3 3" stroke="#c6c6c6" strokeWidth="1.4" /></Svg>
            </ToolHead>
            <ToolGrip><Grip $across /></ToolGrip>
            <ToolList>
              {tools.map((tool, i) => (
                <ToolCell key={tool.name}>
                  <Tool $active={i === 0} aria-label={tool.name}>{tool.icon}</Tool>
                  <Corner />
                </ToolCell>
              ))}
            </ToolList>
          </ToolStrip>
          <Documents>
            <DocTabs>
              <DocTab>
                Untitled-1 @ 71,6% (Layer 1, RGB/8#) *
                <IconButton $w={10} $color="#a0a0a0" aria-label="Close tab">
                  <Svg w={10} h={10} box="0 0 10 10"><path d="M1 1l8 8M9 1L1 9" stroke="currentColor" strokeWidth="1.6" /></Svg>
                </IconButton>
              </DocTab>
              <DocTab $active>Untitled-2 @ 66,7% (Layer 1, RGB/8#) *</DocTab>
            </DocTabs>
            <CanvasArea>
              <Canvas />
            </CanvasArea>
          </Documents>
        </Workspace>
      </Window>
    </Screen>
  )
}
